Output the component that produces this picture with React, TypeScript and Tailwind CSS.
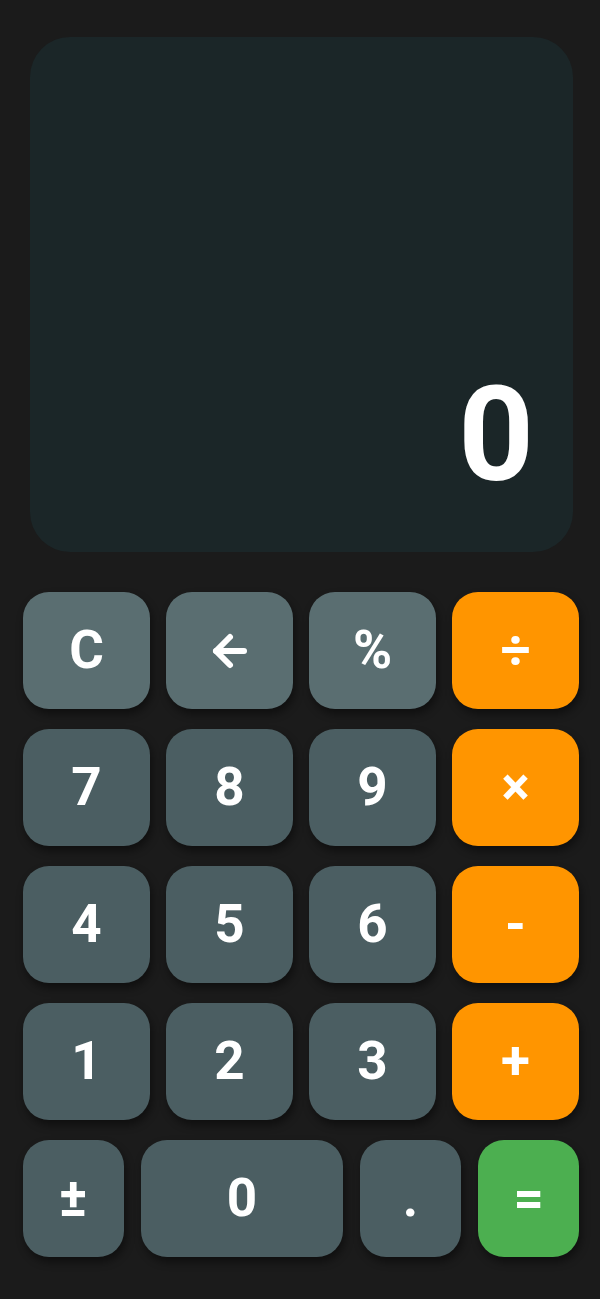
import React from "react";

const fn = "bg-[#5a6e71]";
const num = "bg-[#4b5e62]";
const op = "bg-[#ff9500]";

function Key({ label, cls, extra = "" }: { label: React.ReactNode; cls: string; extra?: string }) {
  return (
    <button
      className={`${cls} ${extra} h-[117px] rounded-[26px] flex items-center justify-center text-white text-[53px] font-bold leading-none shadow-[2px_5px_8px_rgba(0,0,0,0.45)]`}
      style={{ fontFamily: "Roboto, 'Liberation Sans', sans-serif" }}
    >
      {label}
    </button>
  );
}

const Arrow = () => (
  <svg width="48" height="48" viewBox="0 0 24 24" fill="none" stroke="white" strokeWidth="3" strokeLinecap="round" strokeLinejoin="round">
    <path d="m12 19-7-7 7-7" />
    <path d="M19 12H5" />
  </svg>
);

export default function App() {
  return (
    <div className="w-[600px] h-[1299px] bg-[#1b1b1b] pt-[37px] pl-[23px] pr-[21px]" style={{ fontFamily: "Roboto, 'Liberation Sans', sans-serif" }}>
      <div className="ml-[7px] mr-[6px] h-[515px] rounded-[40px] bg-[#1b2628] flex items-end justify-end pr-[39px] pb-[51px]">
        <span className="text-white font-bold text-[132px] leading-none">0</span>
      </div>
      <div className="mt-[40px] grid grid-cols-4 gap-x-[16px] gap-y-[20px]">
        <Key label="C" cls={fn} />
        <Key label={<Arrow />} cls={fn} />
        <Key label="%" cls={fn} />
        <Key label="÷" cls={op} />
        <Key label="7" cls={num} />
        <Key label="8" cls={num} />
        <Key label="9" cls={num} />
        <Key label="×" cls={op} />
        <Key label="4" cls={num} />
        <Key label="5" cls={num} />
        <Key label="6" cls={num} />
        <Key label="-" cls={op} />
        <Key label="1" cls={num} />
        <Key label="2" cls={num} />
        <Key label="3" cls={num} />
        <Key label="+" cls={op} />
      </div>
      <div className="mt-[20px] flex gap-[17.5px]">
        <Key label="±" cls={num} extra="flex-1" />
        <Key label="0" cls={num} extra="flex-[2]" />
        <Key label="." cls={num} extra="flex-1" />
        <Key label="=" cls="bg-[#4caf50]" extra="flex-1" />
      </div>
    </div>
  );
}
